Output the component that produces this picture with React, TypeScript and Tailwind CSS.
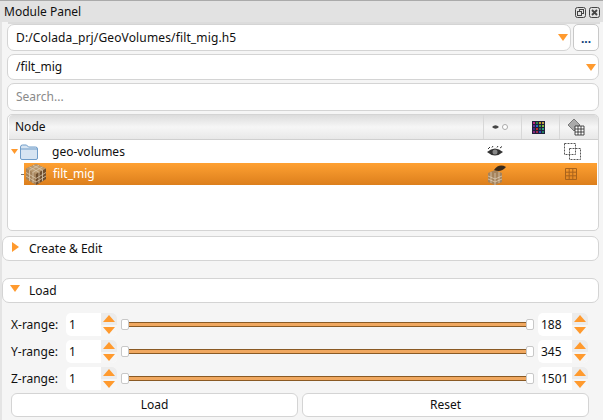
import type { ReactNode } from "react"

const font = "[font-family:'Noto_Sans','Liberation_Sans',sans-serif]"

const ArrowDown = ({ width = 12, height = 7 }: { width?: number; height?: number }) => (
  <svg width={width} height={height} viewBox="0 0 12 7" preserveAspectRatio="none" className="shrink-0">
    <path d="M0 0h12L6 7z" fill="#ff9a2e" />
  </svg>
)

const ArrowUp = () => (
  <svg width="12" height="7" viewBox="0 0 12 7" className="shrink-0">
    <path d="M0 7h12L6 0z" fill="#ff9a2e" />
  </svg>
)

const Cube = () => (
  <svg width="24" height="23" viewBox="0 0 24 23" className="shrink-0">
    <path d="M12 1l10 4.500V16l-10 6-10-6V5.500z" fill="#a5835c" />
    <path d="M12 1l10 4.500-10 5.500-10-5.500z" fill="#b8986f" />
    <path d="M12 11l10-5.500V16l-10 6z" fill="#6f4e2e" />
    <path
      d="M5.500 4l10 5.500M9 2.300l10 5.300M15 2.300L5 7.600M18.500 4l-10 5.500M2 9.500l10 6 10-6M2 13l10 6 10-6M5.500 7.500V18M9 9.300V20M15 9.300V20M18.500 7.500V18"
      stroke="#d9c6ab"
      strokeWidth="0.800"
      fill="none"
    />
  </svg>
)

const Field = ({
  children,
  className = "",
}: {
  children: ReactNode
  className?: string
}) => (
  <div
    className={`flex items-center rounded-[7px] border border-[#d4d4d4] bg-white pl-2 pr-0.5 ${className}`}
  >
    {children}
  </div>
)

const HeaderCell = ({ children }: { children: ReactNode }) => (
  <div className="flex h-full w-[38px] items-center justify-center border-l border-[#d8d8d8] pr-[5px]">
    {children}
  </div>
)

const Section = ({ title, open }: { title: string; open?: boolean }) => (
  <div className="flex h-[25px] items-center rounded-[7px] border border-[#d4d4d4] bg-white">
    <div className="flex w-[24px] justify-center pb-1">
      {open ? (
        <ArrowDown width={10} height={7} />
      ) : (
        <svg width="7" height="10" viewBox="0 0 7 10">
          <path d="M0 0v10l7-5z" fill="#ff9a2e" />
        </svg>
      )}
    </div>
    <span className="pl-0.5">{title}</span>
  </div>
)

const Spin = ({ value, width }: { value: string; width: string }) => (
  <div className={`flex h-[23px] items-center rounded-[5px] bg-white pl-[3px] ${width}`}>
    <span className="flex-1">{value}</span>
    <div className="flex h-full w-[16px] flex-col overflow-hidden rounded-r-[5px]">
      <div className="flex h-1/2 items-center justify-center bg-[#ececec]">
        <ArrowUp />
      </div>
      <div className="flex h-1/2 items-center justify-center bg-[#f6f6f6]">
        <ArrowDown />
      </div>
    </div>
  </div>
)

const SliderHandle = () => (
  <div className="h-[11px] w-[8px] shrink-0 rounded-[2px] border border-[#c8c8c8] bg-white" />
)

const RangeRow = ({ label, max }: { label: string; max: string }) => (
  <div className="flex h-[23px] items-center pl-[9px] pr-[12px]">
    <span className="w-[55px]">{label}</span>
    <Spin value="1" width="w-[51px]" />
    <div className="ml-[4px] flex flex-1 items-center">
      <SliderHandle />
      <div className="flex h-[5px] flex-1 flex-col">
        <div className="h-px bg-[#8a5a24]" />
        <div className="h-[3px] bg-[#f0a860]" />
        <div className="h-px bg-[#8a5a24]" />
      </div>
      <SliderHandle />
    </div>
    <div className="ml-[4px]">
      <Spin value={max} width="w-[50px]" />
    </div>
  </div>
)

export default function App() {
  return (
    <div
      className={`${font} flex h-[420px] w-[603px] flex-col overflow-hidden border-t border-[#aaaaaa] bg-[#f5f5f5] text-[12px] text-[#101010]`}
    >
      {/* dock title */}
      <div className="flex h-[21px] shrink-0 items-center justify-between bg-[#e2e2e2] pl-[4px] pr-[3px]">
        <span>Module Panel</span>
        <div className="flex gap-[3px] pt-px">
          <svg width="11" height="11" viewBox="0 0 11 11" fill="none" stroke="#444">
            <rect x="0.500" y="0.500" width="10" height="10" rx="2" />
            <rect x="4.500" y="2.500" width="4" height="4" />
            <rect x="2.500" y="4.500" width="4" height="4" fill="#e2e2e2" />
          </svg>
          <svg width="11" height="11" viewBox="0 0 11 11" fill="none" stroke="#444">
            <rect x="0.500" y="0.500" width="10" height="10" rx="2" />
            <path d="M3 3l5 5M8 3l-5 5" strokeWidth="1.800" />
          </svg>
        </div>
      </div>

      <div className="flex flex-1 flex-col border-l-2 border-[#e4e4e4] pr-[3px]">
        <div className="ml-[6px] h-[2px] bg-[#dcdcdc]" />
        <div className="flex flex-col gap-[3px] pl-[5px] pr-px">
          <div className="flex h-[27px] gap-[2px]">
            <Field className="flex-1 justify-between">
              <span className="tracking-[0.14px]">D:/Colada_prj/GeoVolumes/filt_mig.h5</span>
              <ArrowDown width={10} height={7} />
            </Field>
            <button className="w-[26px] rounded-[5px] border border-[#c8c8c8] bg-white pt-[2px] font-bold leading-none text-[#0a3c78]">
              ...
            </button>
          </div>
          <Field className="h-[26px] justify-between">
            <span>/filt_mig</span>
            <ArrowDown width={10} height={7} />
          </Field>
          <Field className="h-[28px]">
            <span className="text-[#8a8a8a]">Search...</span>
          </Field>

          {/* node table */}
          <div className="h-[117px] rounded-[5px] border border-[#d4d4d4] bg-white">
            <div className="ml-px flex h-[25px] items-center rounded-t-[4px] border-b border-[#cfcfcf] bg-gradient-to-b from-[#dcdcdc] via-[#f6f6f6] to-[#e8e8e8] pl-[6px] pr-[1px]">
              <span className="flex-1">Node</span>
              <HeaderCell>
                <svg width="17" height="8" viewBox="0 0 17 8">
                  <path d="M0 4q3.500-3.500 7 0q-3.500 3.500-7 0z" fill="#444" />
                  <circle cx="13" cy="4" r="2.500" fill="#fff" stroke="#aaa" />
                </svg>
              </HeaderCell>
              <HeaderCell>
                <div className="grid size-[13px] grid-cols-4 gap-px bg-[#20203a] p-px">
                  <span className="bg-[#c02a80]" />
                  <span className="bg-[#2c8a4a]" />
                  <span className="bg-[#c09a20]" />
                  <span className="bg-[#c0a040]" />
                  <span className="bg-[#6a2a9a]" />
                  <span className="bg-[#2a6ac0]" />
                  <span className="bg-[#40a040]" />
                  <span className="bg-[#80c040]" />
                  <span className="bg-[#3a2a8a]" />
                  <span className="bg-[#c02a2a]" />
                  <span className="bg-[#206a6a]" />
                  <span className="bg-[#30a080]" />
                  <span className="bg-[#802a80]" />
                  <span className="bg-[#a02a4a]" />
                  <span className="bg-[#2a4ac0]" />
                  <span className="bg-[#208060]" />
                </div>
              </HeaderCell>
              <HeaderCell>
                <svg width="18" height="18" viewBox="0 0 18 18" fill="none" stroke="#222" strokeWidth="0.800">
                  <path d="M7 1l6 6-6 6-6-6z" fill="#aaa" stroke="#666" />
                  <path d="M8 8h9v9H8zM11 8v9M14 8v9M8 11h9M8 14h9" fill="#fff" />
                </svg>
              </HeaderCell>
            </div>
            <div className="flex h-[23px] items-center">
              <div className="flex w-[12px] justify-center pl-[1px]">
                <svg width="7" height="5" viewBox="0 0 7 5">
                  <path d="M0 0h7L3.500 5z" fill="#ff9a2e" />
                </svg>
              </div>
              <svg width="18" height="16" viewBox="0 0 18 16" className="shrink-0">
                <path d="M.5 3q0-2 2-2h4l2 2h7q2 0 2 2v9q0 1.500-1.500 1.500H2q-1.500 0-1.500-1.500z" fill="#d6e4f2" stroke="#6f9cc8" />
                <path d="M.5 5h17" stroke="#6f9cc8" />
              </svg>
              <span className="ml-[14px] flex-1">geo-volumes</span>
              <svg width="18" height="12" viewBox="0 0 18 12" className="shrink-0">
                <path d="M1 6q8-7 16 0q-8 7-16 0z" fill="#333" />
                <path d="M2 3L4 1M6 1.500L7 0M11 1.500L12 0M14 2L16 .5" stroke="#333" />
                <circle cx="9" cy="6" r="2.500" fill="#888" />
              </svg>
              <svg width="17" height="17" viewBox="0 0 17 17" fill="none" stroke="#555" strokeDasharray="2 1" className="ml-[60px] mr-[17px] shrink-0">
                <rect x="0.500" y="0.500" width="11" height="11" />
                <rect x="5.500" y="5.500" width="11" height="11" />
              </svg>
            </div>
            <div className="flex h-[22px] items-center">
              <div className="ml-[13px] h-px w-[3px] bg-[#777]" />
              <div className="mr-px flex h-full flex-1 items-center bg-gradient-to-b from-[#ffa132] to-[#dc7f1c] text-white">
                <Cube />
                <span className="ml-[5px] flex-1">filt_mig</span>
                <svg width="20" height="21" viewBox="0 0 20 21" className="shrink-0">
                  <path d="M1 9l7-3 7 3v9l-7 3-7-3z" fill="#a5835c" />
                  <path d="M7 6q5-7 12-3q-5 6-12 3z" fill="#3a2a1a" />
                  <path d="M1 12l7 3 7-3M1 15l7 3 7-3M8 9v12M4 8v11M12 8v11" stroke="#e2d3bd" strokeWidth="0.700" fill="none" />
                </svg>
                <svg width="12" height="12" viewBox="0 0 12 12" fill="none" stroke="#a8631c" className="ml-[58px] mr-[20px] shrink-0">
                  <path d="M.5.500h11v11H.5zM4.200.500v11M7.800.500v11M.5 4.200h11M.5 7.800h11" />
                </svg>
              </div>
            </div>
          </div>
        </div>

        <div className="mt-[5px] pr-px">
          <Section title="Create & Edit" />
        </div>
        <div className="mt-[17px] pr-px">
          <Section title="Load" open />
        </div>

        <div className="mt-[10px] flex flex-col gap-[4px]">
          <RangeRow label="X-range:" max="188" />
          <RangeRow label="Y-range:" max="345" />
          <RangeRow label="Z-range:" max="1501" />
        </div>

        <div className="mt-[3px] flex gap-[4px] pl-[9px] pr-[11px]">
          <button className="h-[24px] flex-1 rounded-[6px] border border-[#d4d4d4] bg-white">Load</button>
          <button className="h-[24px] flex-1 rounded-[6px] border border-[#d4d4d4] bg-white">Reset</button>
        </div>
      </div>
    </div>
  )
}
